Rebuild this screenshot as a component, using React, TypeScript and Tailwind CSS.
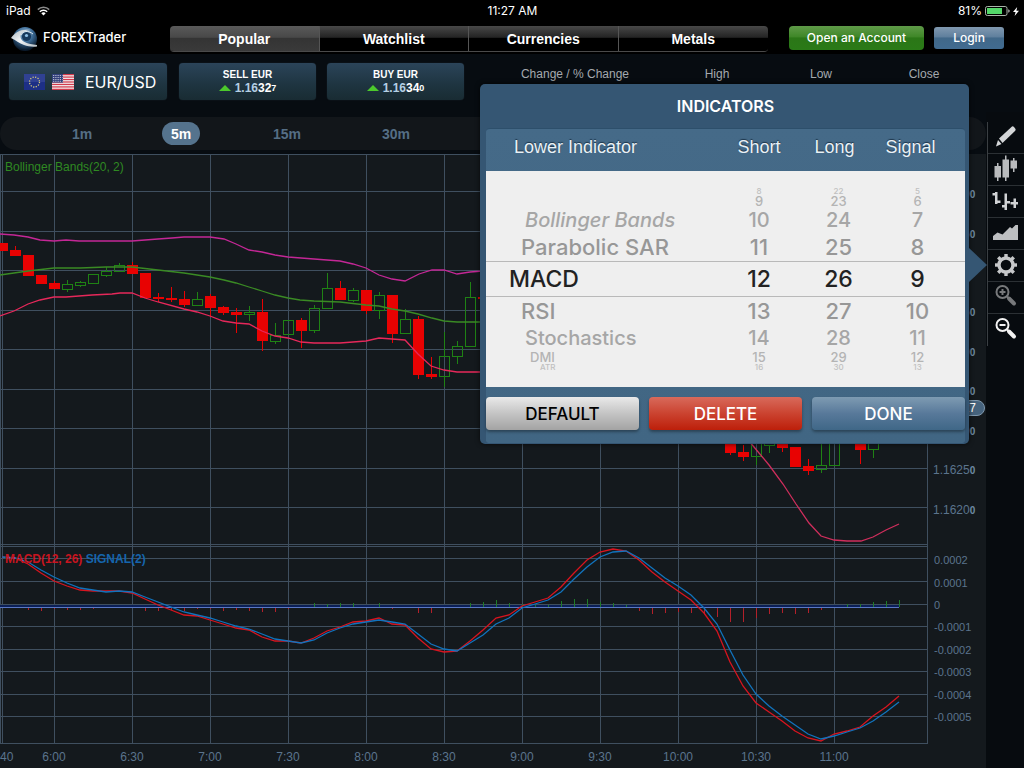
import React, { useState } from "react";

type Point = [number, number];
type Candle = { x: number; up?: boolean; top: number; bottom: number; high?: number; low?: number };

const CANDLES: Candle[] = [
  { x: 2, top: 243, bottom: 251 },
  { x: 15, top: 250, bottom: 256, high: 246 },
  { x: 28, top: 255, bottom: 276 },
  { x: 41, top: 275, bottom: 284 },
  { x: 54, top: 283, bottom: 289, high: 281 },
  { x: 67, up: true, top: 284, bottom: 289, high: 280, low: 292 },
  { x: 80, up: true, top: 282, bottom: 285, high: 281, low: 287 },
  { x: 93, up: true, top: 274, bottom: 283 },
  { x: 106, up: true, top: 271, bottom: 275, high: 267, low: 277 },
  { x: 119, up: true, top: 265, bottom: 271, high: 263 },
  { x: 132, top: 265, bottom: 274, high: 262 },
  { x: 145, top: 273, bottom: 298 },
  { x: 158, top: 297, bottom: 299, high: 293, low: 302 },
  { x: 171, top: 298, bottom: 300, high: 287, low: 302 },
  { x: 184, top: 299, bottom: 305, high: 291, low: 307 },
  { x: 197, up: true, top: 299, bottom: 305, high: 292 },
  { x: 210, top: 296, bottom: 308, high: 294, low: 317 },
  { x: 223, top: 307, bottom: 313, high: 306, low: 315 },
  { x: 236, top: 312, bottom: 315, high: 308, low: 333 },
  { x: 249, up: true, top: 312, bottom: 314, high: 306, low: 321 },
  { x: 262, top: 312, bottom: 341, high: 299, low: 351 },
  { x: 275, up: true, top: 335, bottom: 341, high: 323, low: 344 },
  { x: 288, up: true, top: 320, bottom: 334 },
  { x: 301, top: 320, bottom: 331, high: 318, low: 348 },
  { x: 314, up: true, top: 308, bottom: 330, high: 305, low: 333 },
  { x: 327, up: true, top: 288, bottom: 308, high: 273 },
  { x: 340, top: 288, bottom: 300, high: 281 },
  { x: 353, up: true, top: 290, bottom: 300, high: 288, low: 302 },
  { x: 366, top: 290, bottom: 311, low: 314 },
  { x: 379, up: true, top: 295, bottom: 310, high: 292, low: 319 },
  { x: 392, top: 295, bottom: 334, low: 343 },
  { x: 405, up: true, top: 319, bottom: 333, high: 309 },
  { x: 418, top: 319, bottom: 375, high: 316, low: 379 },
  { x: 431, top: 374, bottom: 377, high: 357, low: 379 },
  { x: 444, up: true, top: 356, bottom: 376, high: 332, low: 387 },
  { x: 457, up: true, top: 346, bottom: 356, high: 341, low: 364 },
  { x: 470, up: true, top: 297, bottom: 346, high: 282 },
  { x: 483, top: 297, bottom: 299 },
  { x: 730, top: 436, bottom: 453, low: 455 },
  { x: 743, top: 452, bottom: 457, high: 445, low: 461 },
  { x: 756, up: true, top: 436, bottom: 456, low: 465 },
  { x: 769, up: true, top: 436, bottom: 445, low: 453 },
  { x: 782, top: 436, bottom: 448, low: 452 },
  { x: 795, top: 447, bottom: 467 },
  { x: 808, top: 466, bottom: 471, high: 459, low: 475 },
  { x: 821, up: true, top: 465, bottom: 469, high: 440, low: 473 },
  { x: 834, up: true, top: 436, bottom: 465 },
  { x: 860, top: 436, bottom: 450, low: 464 },
  { x: 873, up: true, top: 436, bottom: 449, low: 458 },
];

const UPPER: Point[] = [[0, 234], [14, 235], [28, 237], [40, 240], [54, 241], [66, 240], [79, 241], [132, 241], [145, 240], [158, 239], [172, 238], [184, 237], [197, 237], [210, 237], [224, 239], [236, 244], [249, 250], [262, 252], [275, 255], [288, 257], [314, 259], [340, 261], [353, 264], [366, 268], [379, 275], [392, 279], [405, 281], [419, 274], [432, 270], [444, 270], [457, 274], [470, 272], [483, 271]];
const MIDDLE: Point[] = [[0, 275], [14, 273], [28, 271], [54, 268], [80, 268], [106, 267], [132, 267], [158, 270], [184, 273], [210, 277], [224, 280], [236, 283], [249, 287], [262, 291], [275, 295], [288, 298], [300, 300], [314, 301], [340, 302], [366, 305], [379, 306], [392, 309], [405, 311], [418, 314], [432, 318], [444, 321], [457, 322], [483, 322]];
const LOWER: Point[] = [[0, 316], [14, 311], [28, 304], [40, 300], [54, 297], [66, 297], [92, 295], [112, 294], [120, 293], [132, 293], [145, 298], [158, 302], [184, 309], [197, 312], [210, 316], [223, 321], [236, 323], [249, 324], [262, 331], [275, 336], [288, 338], [301, 342], [314, 343], [340, 343], [353, 342], [366, 341], [379, 338], [392, 339], [405, 340], [418, 354], [431, 366], [444, 370], [457, 372], [483, 372]];
const LOWER_END: Point[] = [[745, 436], [754, 447], [769, 465], [783, 484], [796, 504], [809, 523], [821, 536], [834, 540], [847, 541], [861, 541], [873, 537], [886, 530], [899, 524]];

const MACD = [557, 558, 564, 573, 581, 586, 590, 591, 591, 591, 593, 599, 605, 610, 615, 616, 620, 624, 628, 630, 637, 641, 641, 643, 638, 631, 627, 622, 621, 618, 624, 625, 638, 649, 652, 651, 641, 630, 618, 615, 606, 602, 598, 587, 573, 560, 552, 549, 551, 560, 572, 582, 591, 600, 613, 631, 662, 686, 703, 712, 721, 731, 738, 741, 734, 731, 727, 716, 707, 696];
const SIGNAL = [557, 558, 562, 570, 577, 583, 588, 590, 592, 591, 592, 597, 602, 607, 612, 615, 618, 622, 626, 629, 634, 639, 641, 643, 640, 633, 628, 624, 622, 620, 622, 624, 634, 644, 649, 651, 643, 635, 624, 618, 608, 604, 600, 592, 579, 567, 557, 552, 551, 558, 568, 578, 586, 595, 608, 624, 650, 675, 694, 706, 716, 725, 734, 739, 736, 732, 728, 721, 712, 702];

// Positive values rise above the zero line, negative ones hang below it.
const HISTOGRAM = [0, 0, -2, -3, -1, -2, -2, -1, 0, 0, 0, -3, -3, -2, -3, -1, -1, -3, -2, -3, -4, -4, -1, 0, 4, 3, 4, 4, 0, 4, -1, 0, -5, -5, 0, 0, 4, 5, 7, 4, 3, 2, 2, 6, 8, 8, 5, 4, 2, -3, -6, -5, -4, -5, -6, -9, -14, -14, -10, -6, -5, -6, -5, -2, 0, 3, 3, 5, 6, 7];

const GRID_X = [54, 132, 210, 288, 366, 444, 522, 600, 678, 756, 834];
const GRID_Y = [154, 191, 231, 270, 310, 349, 389, 428, 468, 507, 544, 546, 558, 581, 604, 626, 649, 671, 694, 716, 743];
const TIMES = ["6:00", "6:30", "7:00", "7:30", "8:00", "8:30", "9:00", "9:30", "10:00", "10:30", "11:00"];
const PRICES = ["1.1660", "1.1655", "1.1650", "1.1645", "1.1640", "1.1635", "1.1630", "1.1625", "1.1620"];
const LEVELS = ["0.0002", "0.0001", "0", "-0.0001", "-0.0002", "-0.0003", "-0.0004", "-0.0005"];

const toPoints = (points: Point[]) => points.map((p) => p.join(",")).join(" ");
const toSeries = (values: number[]) => values.map((v, i) => `${2 + i * 13},${v}`).join(" ");

function Chart() {
  return (
    <svg viewBox="0 154 928 590" preserveAspectRatio="none" className="block h-full w-full" role="img" aria-label="EUR/USD price chart">
      <g shapeRendering="crispEdges" fill="#3f4f5f">
        {GRID_X.map((x) => <rect key={x} x={x} y="154" width="1" height="590" />)}
        {GRID_Y.map((y) => <rect key={y} x="0" y={y} width="928" height="1" />)}
        <rect x="0" y="154" width="1" height="590" />
        <rect x="2" y="154" width="1" height="590" />
        <rect x="927" y="154" width="1" height="590" />
      </g>
      <rect x="0" y="605" width="899" height="2" fill="#0b1f56" shapeRendering="crispEdges" />
      <rect x="0" y="607" width="899" height="1" fill="#5a78c4" shapeRendering="crispEdges" />
      <g shapeRendering="crispEdges">
        {HISTOGRAM.map((v, i) =>
          v === 0 ? null : (
            <rect key={i} x={2 + i * 13} y={v > 0 ? 607 - v : 608} width="1" height={Math.abs(v)} fill={v > 0 ? "#1f7a2a" : "#b3202a"} />
          )
        )}
      </g>
      <g shapeRendering="crispEdges">
        {CANDLES.map((c) => {
          const color = c.up ? "#1f8214" : "#e80202";
          return (
            <g key={c.x} fill={color}>
              {c.high !== undefined && <rect x={c.x} y={c.high} width="1" height={c.top - c.high} />}
              {c.low !== undefined && <rect x={c.x} y={c.bottom} width="1" height={c.low - c.bottom} />}
              {c.up ? (
                <rect x={c.x - 4.5} y={c.top + 0.5} width="10" height={c.bottom - c.top} fill="none" stroke={color} />
              ) : (
                <rect x={c.x - 5} y={c.top} width="11" height={c.bottom - c.top} />
              )}
            </g>
          );
        })}
      </g>
      <g fill="none" strokeWidth="1.3">
        <polyline points={toPoints(UPPER)} stroke="#c42796" />
        <polyline points={toPoints(MIDDLE)} stroke="#3a8a24" />
        <polyline points={toPoints(LOWER)} stroke="#e6285a" />
        <polyline points={toPoints(LOWER_END)} stroke="#cf2e5c" />
        <polyline points={toSeries(MACD)} stroke="#d8141f" />
        <polyline points={toSeries(SIGNAL)} stroke="#1173bd" />
      </g>
    </svg>
  );
}

function Logo() {
  return (
    <svg viewBox="0 0 28 26" className="h-[26px] w-[28px]" aria-hidden="true">
      <defs>
        <radialGradient id="globe" cx="0.5" cy="0.3" r="0.65">
          <stop offset="0" stopColor="#9dc0da" />
          <stop offset="0.5" stopColor="#3b6a95" />
          <stop offset="1" stopColor="#0a1a2c" />
        </radialGradient>
        <linearGradient id="swoosh" x1="0" y1="0" x2="1" y2="1">
          <stop offset="0" stopColor="#a9b4bc" />
          <stop offset="0.5" stopColor="#f2f5f7" />
          <stop offset="1" stopColor="#b4bcc2" />
        </linearGradient>
      </defs>
      <circle cx="15" cy="13" r="12" fill="url(#globe)" />
      <circle cx="16.500" cy="10.500" r="4.600" fill="#17395c" />
      <circle cx="16.500" cy="9.500" r="1.600" fill="#8fc0e6" />
      <path d="M1 12 C5 6 11 2.500 21 4 C14 4.500 10.500 7 10.500 11 C11 15.500 17 18 27 19 V20.500 C22 21 18 20.500 14 19 C9 17.500 6 14 1 12Z" fill="url(#swoosh)" />
      <path d="M11 9 C13 5 18 4 23 8" fill="none" stroke="#dfe8ee" strokeWidth="1" />
    </svg>
  );
}

function EuFlag() {
  return (
    <svg viewBox="0 0 21 16" className="h-[16px] w-[21px]" aria-hidden="true">
      <rect width="21" height="16" fill="#1d2f86" />
      <rect width="21" height="8" fill="#3d4f9c" opacity="0.6" />
      <circle cx="10.500" cy="8" r="5" fill="none" stroke="#d6cb7a" strokeWidth="1.300" strokeDasharray="1.200 1.418" />
    </svg>
  );
}

function UsFlag() {
  return (
    <svg viewBox="0 0 22 16" className="h-[16px] w-[22px]" aria-hidden="true">
      <rect width="22" height="16" fill="#f2eef0" />
      {[0, 2, 4, 6, 8, 10, 12].map((i) => <rect key={i} y={i * 1.23} width="22" height="1.23" fill="#d23a4c" />)}
      <rect width="11" height="8.600" fill="#33417c" />
      {[1.5, 3.5, 5.5, 7.3].map((y) => <line key={y} x1="1" x2="10.500" y1={y} y2={y} stroke="#fff" strokeWidth="0.800" strokeDasharray="0.800 1" />)}
    </svg>
  );
}

function StatusBar() {
  return (
    <div className="grid h-[20px] grid-cols-3 items-center bg-black pt-[2px] pr-[5px] pl-[6px] text-[12px] leading-[16px] text-white">
      <div className="flex items-center gap-[6px]">
        <span>iPad</span>
        <svg viewBox="0 0 13 10" className="h-[10px] w-[13px]" aria-label="Wi-Fi">
          <path d="M0.800 3.600 A8 8 0 0 1 12.200 3.600" fill="none" stroke="#8a8a8a" strokeWidth="1.500" />
          <path d="M2.800 5.700 A5.200 5.200 0 0 1 10.200 5.700" fill="none" stroke="#fff" strokeWidth="1.500" />
          <path d="M6.500 9.500 L4.300 7.300 A3.100 3.100 0 0 1 8.700 7.300Z" fill="#fff" />
        </svg>
      </div>
      <div className="text-center">11:27 AM</div>
      <div className="flex items-center justify-end gap-[3px]">
        <span>81%</span>
        <svg viewBox="0 0 25 10" className="h-[10px] w-[25px]" aria-label="Battery">
          <rect x="0.500" y="0.500" width="21.500" height="9" rx="1.800" fill="none" stroke="#a9b5a9" />
          <rect x="2" y="2" width="15" height="6" fill="#53d769" />
          <path d="M23.300 3.200 v3.600 q1.400 -0.500 1.400 -1.800 t-1.400 -1.800Z" fill="#c8c8c8" />
        </svg>
        <svg viewBox="0 0 6 9" className="h-[9px] w-[6px]" aria-label="Charging">
          <path d="M4.200 0 L0 5 H2.600 L1.600 9 L6 3.800 H3.400Z" fill="#fff" />
        </svg>
      </div>
    </div>
  );
}

function Header() {
  const [active, setActive] = useState("Popular");
  return (
    <header className="flex h-[34px] items-start bg-black pt-[6px] pr-[20px] pl-[10px] text-white">
      <div className="flex w-[160px] items-center gap-[5px]">
        <Logo />
        <span className="pb-[2px] text-[13px] font-medium">FOREXTrader</span>
      </div>
      <nav className="grid min-w-0 flex-1 grid-cols-4 overflow-hidden rounded-[4px] border-b border-[#4a4a4a] font-['Liberation_Sans',sans-serif]">
        {["Popular", "Watchlist", "Currencies", "Metals"].map((name) => (
          <button
            key={name}
            type="button"
            onClick={() => setActive(name)}
            className={
              "h-[25px] border-r border-[#555] text-[14px] leading-[20px] font-bold last:border-r-0 " +
              (active === name
                ? "bg-[linear-gradient(#5a5a5a,#484848_45%,#343434_50%,#3a3a3a)]"
                : "bg-[linear-gradient(#484848,#242424_45%,#000_50%,#000)]")
            }
          >
            {name}
          </button>
        ))}
      </nav>
      <button type="button" className="ml-[21px] h-[24px] w-[135px] rounded-[4px] bg-[linear-gradient(#5f9a48,#3f8728_45%,#2b7617_50%,#2a7a17)] text-[12px] leading-[16px] font-medium">
        Open an Account
      </button>
      <button type="button" className="mt-[1px] ml-[10px] h-[22px] w-[70px] rounded-[3px] bg-[linear-gradient(#8199b0,#5f7f9d_45%,#416889_50%,#416b90)] text-[12px] leading-[16px] font-medium">
        Login
      </button>
    </header>
  );
}

const TILE = "rounded-[4px] bg-[linear-gradient(#2b4459,#1e3440_60%,#192c33)] shadow-[0_0_1px_#2a3c48] text-white ";

function Quote({ title, big, strong, small }: { title: string; big: string; strong: string; small: string }) {
  return (
    <button type="button" className={TILE + "flex h-[37px] w-[137px] flex-col items-center justify-center font-['Liberation_Sans',sans-serif] font-bold"}>
      <span className="text-[10px] leading-[13px]">{title}</span>
      <span className="flex items-center text-[12px] leading-[14px]">
        <svg viewBox="0 0 12 6" className="mr-[4px] h-[6px] w-[12px]" aria-hidden="true"><path d="M6 0 L12 6 H0Z" fill="#4cc92c" /></svg>
        <span className="text-[#b4cfe4]">{big}</span>
        <span>{strong}</span>
        <span className="text-[9px]">{small}</span>
      </span>
    </button>
  );
}

function QuoteBar() {
  return (
    <section className="flex h-[58px] items-start bg-[#070c11] pt-[9px] pl-[9px]">
      <button type="button" className={TILE + "flex h-[37px] w-[158px] items-center pl-[15px] text-[16px]"}>
        <EuFlag />
        <span className="ml-[7px]"><UsFlag /></span>
        <span className="ml-[11px]">EUR/USD</span>
      </button>
      <div className="ml-[12px] flex gap-[11px]">
        <Quote title="SELL EUR" big="1.16" strong="32" small="7" />
        <Quote title="BUY EUR" big="1.16" strong="34" small="0" />
      </div>
      <div className="ml-[45px] grid flex-1 grid-cols-[132fr_152fr_56fr_150fr_25fr] pt-[3px] text-center font-['Liberation_Sans',sans-serif] text-[12px] leading-[16px] text-[#a4a9ae]">
        <span>Change / % Change</span>
        <span>High</span>
        <span>Low</span>
        <span>Close</span>
      </div>
    </section>
  );
}

function Timeframes() {
  const [frame, setFrame] = useState("5m");
  return (
    <div className="mt-[5px] mb-[4px] grid h-[33px] grid-cols-[100px_98px_114px_104px] place-items-center rounded-full bg-[#12161a] pl-[32px] font-['Liberation_Sans',sans-serif] text-[14px] leading-[16px] font-bold">
      {["1m", "5m", "15m", "30m"].map((f) => (
        <button
          key={f}
          type="button"
          onClick={() => setFrame(f)}
          className={"h-[23px] rounded-full px-[9px] " + (frame === f ? "bg-[#55738d] text-white" : "text-[#556e85]")}
        >
          {f}
        </button>
      ))}
    </div>
  );
}

function Magnifier({ color, plus }: { color: string; plus?: boolean }) {
  return (
    <>
      <circle cx="14.500" cy="10" r="6" fill="none" stroke={color} strokeWidth="2" />
      <path d={plus ? "M11.500 10 h6 M14.500 7 v6" : "M11.500 10 h6"} stroke={color} strokeWidth="2" />
      <path d="M19 14.500 L21 16.500" stroke={color} strokeWidth="2" />
      <path d="M21 16.500 L26 21.500" stroke={color} strokeWidth="4" strokeLinecap="round" />
    </>
  );
}

const TOOLS: { name: string; icon: React.ReactNode }[] = [
  {
    name: "Draw",
    icon: (
      <g fill="#d4d6d8">
        <path d="M11 16.500 L24 4.500 Q25 4 26 5 L27.500 7 Q28 8 27 9 L14.500 21Z" />
        <path d="M10 18 L13.500 22 L8 24.500Z" />
      </g>
    ),
  },
  {
    name: "Candlesticks",
    icon: (
      <g fill="#b9bbbd">
        <path d="M9 9 h1.500 v3 h2.500 v11.500 h-2.500 v3.500 h-1.500 v-3.500 h-2.500 v-11.500 h2.500Z" />
        <path d="M17 1.500 h1.500 v4 h2.500 v18 h-2.500 v3.500 h-1.500 v-3.500 h-2.500 v-18 h2.500Z" />
        <path d="M25 4 h1.500 v2.500 h2.500 v8 h-2.500 v3.500 h-1.500 v-3.500 h-2.500 v-8 h2.500Z" />
      </g>
    ),
  },
  {
    name: "Bars",
    icon: (
      <path d="M7 6 h2.500 v8.500 h3 v2.500 h-3 v1 h-2.500 v-8.500 h-2.500 v-2.500 h2.500Z M16.500 7.500 h2.500 v7.500 h3 v2.500 h-3 v6.500 h-2.500 v-2.500 h-2.500 v-2.500 h2.500Z M25.500 12.500 h2.500 v3.500 h2 v2.500 h-2 v3.500 h-2.500 v-3.500 h-3 v-2.500 h3Z" fill="#d0d2d4" />
    ),
  },
  { name: "Area", icon: <path d="M5 22 V18 L9.500 14.500 L14.500 16.500 L22 9 L24 10.500 L27.500 7 H30 V22Z" fill="#bdbfc1" /> },
  {
    name: "Indicators",
    icon: (
      <g stroke="#c6c8ca" fill="none">
        <circle cx="18" cy="15" r="7" strokeWidth="3.400" />
        {[0, 45, 90, 135, 180, 225, 270, 315].map((a) => (
          <path key={a} d="M18 4 V8" strokeWidth="3.400" transform={`rotate(${a} 18 15)`} />
        ))}
      </g>
    ),
  },
  { name: "Zoom in", icon: <Magnifier color="#77797b" plus /> },
  { name: "Zoom out", icon: <Magnifier color="#f2f2f2" /> },
];

function Toolbar() {
  return (
    <aside className="w-[38px] bg-[#070b0f] pt-[10px]">
      <div className="ml-[1px] divide-y divide-[#2b3034] border-l border-[#3a3f43]">
        {TOOLS.map((tool) => (
          <button key={tool.name} type="button" aria-label={tool.name} className="block h-[32px] w-full">
            <svg viewBox="0 0 36 31" className="block h-[31px] w-[36px]">{tool.icon}</svg>
          </button>
        ))}
      </div>
    </aside>
  );
}

const ROW_STYLES = [
  "h-[8px] items-center text-[8px] leading-[8px] text-[#c0c0c0]",
  "h-[12px] items-center text-[13px] leading-[12px] text-[#b4b4b4]",
  "h-[26px] items-center text-[20px] leading-[24px] text-[#a6a6a6]",
  "h-[28px] items-center text-[22px] leading-[26px] text-[#979797]",
  "h-[36px] items-center text-[23px] leading-[28px] text-[#222]",
  "h-[28px] items-center text-[22px] leading-[26px] text-[#979797]",
  "h-[26px] items-center text-[20px] leading-[24px] text-[#a6a6a6]",
  "h-[12px] items-center text-[13px] leading-[12px] text-[#b4b4b4]",
  "h-[8px] items-center text-[8px] leading-[8px] text-[#c0c0c0]",
];

const NAME_INSETS = ["pl-[54px]", "pl-[44px]", "pl-[39px] italic", "pl-[35px]", "pl-[23px]", "pl-[35px]", "pl-[39px]", "pl-[44px]", "pl-[54px]"];
const NAMES = ["", "", "Bollinger Bands", "Parabolic SAR", "MACD", "RSI", "Stochastics", "DMI", "ATR"];

function Wheel({ label, values, insets }: { label: string; values: string[]; insets?: string[] }) {
  return (
    <div role="listbox" aria-label={label} className="flex flex-col font-medium">
      {values.map((value, i) => (
        <div
          key={i}
          role="option"
          aria-selected={i === 4}
          className={"flex whitespace-nowrap " + ROW_STYLES[i] + (insets ? " " + insets[i] : " justify-center")}
        >
          {value}
        </div>
      ))}
    </div>
  );
}

function IndicatorsPopover() {
  const action = "h-[33px] rounded-[4px] text-[17px] leading-[22px] font-medium shadow-[0_2px_3px_rgba(0,0,0,0.35)] ";
  const columns = "grid grid-cols-[233px_80px_79px_79px] ";
  return (
    <div role="dialog" aria-label="Indicators" className="absolute top-[84px] right-[55px] w-[489px] rounded-[5px] bg-[#355673] pr-[4px] pb-[1px] pl-[6px] shadow-[0_0_5px_rgba(0,0,0,0.7)]">
      <svg viewBox="0 0 18 34" className="absolute top-[164px] left-full h-[34px] w-[18px]" aria-hidden="true">
        <path d="M0 0 L18 17 L0 34Z" fill="#355673" />
      </svg>
      <h2 className="flex h-[44px] items-center justify-center text-[16px] font-semibold text-white">INDICATORS</h2>
      <div className="rounded-[4px] border-t border-[#2d4f6b] bg-[#44698a] bg-[linear-gradient(#456a88,#416683)]">
        <div className={columns + "h-[42px] items-center pb-[6px] text-center font-['Liberation_Sans',sans-serif] text-[18px] leading-[22px] text-[#e9f1f6] [text-shadow:0_-1px_1px_#1b3348]"}>
          <span className="pl-[28px] text-left">Lower Indicator</span>
          <span>Short</span>
          <span className="pr-[8px]">Long</span>
          <span className="pr-[14px]">Signal</span>
        </div>
        <div className={columns + "h-[216px] content-center bg-[#efefef] bg-[linear-gradient(#b9b9b9,#b9b9b9),linear-gradient(#b9b9b9,#b9b9b9)] bg-[length:100%_1px] bg-[position:0_90px,0_125px] bg-no-repeat"}>
          <Wheel label="Lower Indicator" values={NAMES} insets={NAME_INSETS} />
          <Wheel label="Short" values={["8", "9", "10", "11", "12", "13", "14", "15", "16"]} />
          <Wheel label="Long" values={["22", "23", "24", "25", "26", "27", "28", "29", "30"]} />
          <Wheel label="Signal" values={["5", "6", "7", "8", "9", "10", "11", "12", "13"]} />
        </div>
        <div className="grid grid-cols-3 gap-[10px] pt-[10px] pb-[13px]">
          <button type="button" className={action + "bg-[linear-gradient(#e9e9e9,#c4c4c4_50%,#a3a3a3)] text-black"}>DEFAULT</button>
          <button type="button" className={action + "bg-[linear-gradient(#d86a5b,#cb4330_50%,#bd1f0a)] text-white"}>DELETE</button>
          <button type="button" className={action + "bg-[linear-gradient(#7e9bb2,#58799a_50%,#3f6787)] text-white"}>DONE</button>
        </div>
      </div>
    </div>
  );
}

export default function App() {
  return (
    <div className="relative flex h-screen flex-col overflow-hidden bg-[#070c11] font-['Inter',sans-serif]">
      <StatusBar />
      <Header />
      <QuoteBar />
      <div className="flex min-h-0 flex-1">
        <main className="flex min-w-0 flex-1 flex-col">
          <Timeframes />
          <div className="grid min-h-0 flex-1 grid-cols-[minmax(0,1fr)_58px] grid-rows-[minmax(0,1fr)_24px] bg-[#14191d] font-['Liberation_Sans',sans-serif] text-[12px] leading-[14px] text-[#5b748d]">
            <div className="relative min-h-0">
              <Chart />
              <span className="absolute top-[6px] left-[5px] text-[#2f8a22]">Bollinger Bands(20, 2)</span>
              <span className="absolute top-2/3 left-[5px] pt-[5px] font-bold text-[#c8141f]">
                MACD(12, 26) <span className="text-[#1565ad]">SIGNAL(2)</span>
              </span>
            </div>
            <div className="relative grid grid-rows-[40fr_repeat(9,79fr)_38fr_repeat(8,45fr)_31fr] items-center pt-[1px] pl-[5px]">
              <div />
              {PRICES.map((p) => (
                <span key={p}>{p}<span className="text-[10px] font-bold text-[#6f8aa3]">0</span></span>
              ))}
              <div />
              {LEVELS.map((l) => <span key={l} className="pl-[1px] text-[11px]">{l}</span>)}
              <span className="absolute top-[42%] right-[1px] mt-[-2px] h-[16px] rounded-full border border-[#7f98ad] bg-[#46637d] pr-[8px] pl-[4px] text-[12px] leading-[14px] text-white">1.16327</span>
            </div>
            <div className="grid grid-cols-[15fr_repeat(11,78fr)_55fr] items-center overflow-hidden pt-[2px] text-center">
              <span className="text-left">40</span>
              {TIMES.map((t) => <span key={t}>{t}</span>)}
            </div>
          </div>
        </main>
        <Toolbar />
      </div>
      <IndicatorsPopover />
    </div>
  );
}
